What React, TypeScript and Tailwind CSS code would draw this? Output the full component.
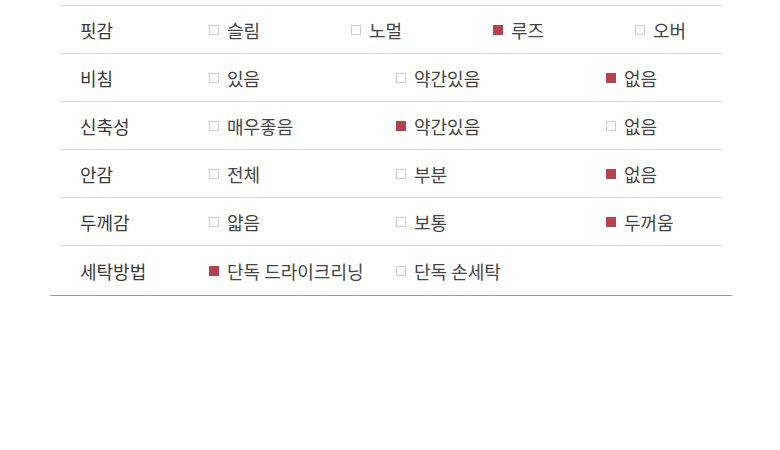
import React from "react";

type Option = { label: string; checked?: boolean };
type Row = { title: string; widths: string[]; options: Option[] };

const rows: Row[] = [
  {
    title: "핏감",
    widths: ["w-[142px]", "w-[142px]", "w-[142px]", "flex-1"],
    options: [
      { label: "슬림" },
      { label: "노멀" },
      { label: "루즈", checked: true },
      { label: "오버" },
    ],
  },
  {
    title: "비침",
    widths: ["w-[187px]", "w-[210px]", "flex-1"],
    options: [{ label: "있음" }, { label: "약간있음" }, { label: "없음", checked: true }],
  },
  {
    title: "신축성",
    widths: ["w-[187px]", "w-[210px]", "flex-1"],
    options: [{ label: "매우좋음" }, { label: "약간있음", checked: true }, { label: "없음" }],
  },
  {
    title: "안감",
    widths: ["w-[187px]", "w-[210px]", "flex-1"],
    options: [{ label: "전체" }, { label: "부분" }, { label: "없음", checked: true }],
  },
  {
    title: "두께감",
    widths: ["w-[187px]", "w-[210px]", "flex-1"],
    options: [{ label: "얇음" }, { label: "보통" }, { label: "두꺼움", checked: true }],
  },
  {
    title: "세탁방법",
    widths: ["w-[187px]", "flex-1"],
    options: [{ label: "단독 드라이크리닝", checked: true }, { label: "단독 손세탁" }],
  },
];

const CheckBox: React.FC<{ checked?: boolean }> = ({ checked }) => (
  <span
    className={
      "inline-block w-[10px] h-[10px] shrink-0 " +
      (checked ? "bg-[#b5434b]" : "border border-[#cfcfcf] bg-white")
    }
  />
);

export default function App() {
  return (
    <div
      className="w-[780px] h-[450px] bg-white pt-[5px] text-[#333]"
      style={{ fontFamily: '"Noto Sans CJK KR", "Noto Sans", sans-serif' }}
    >
      <div className="ml-[50px] w-[682px] border-b border-[#9a9a9a]">
        <div className="mx-[10px]">
          {rows.map((row, i) => (
            <div
              key={row.title}
              className={
                "flex items-center border-t border-[#dcdcdc] " +
                (i === rows.length - 1 ? "h-[50px]" : "h-[48px]")
              }
            >
              <div className="w-[149px] pl-[20px] text-[18px] leading-none text-[#3a3a3a]">
                {row.title}
              </div>
              <div className="flex flex-1 items-center">
                {row.options.map((opt, j) => (
                  <div key={j} className={"flex items-center gap-[8px] " + row.widths[j]}>
                    <CheckBox checked={opt.checked} />
                    <span className="text-[18px] leading-none text-[#444]">{opt.label}</span>
                  </div>
                ))}
              </div>
            </div>
          ))}
        </div>
      </div>
    </div>
  );
}
